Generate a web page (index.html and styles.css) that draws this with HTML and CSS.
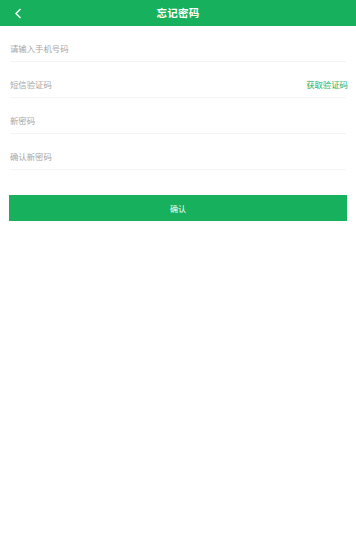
FILE: index.html
```html
<!DOCTYPE html>
<html lang="zh-CN">
<head>
<meta charset="utf-8">
<title>忘记密码</title>
<link rel="stylesheet" href="styles.css">
</head>
<body>
<header class="topbar">
  <span class="back">
    <svg width="8" height="11" viewBox="0 0 8 11"><polyline points="6.5,1 2,5.5 6.5,10" fill="none" stroke="#fff" stroke-width="1.4"/></svg>
  </span>
  <h1 class="title">忘记密码</h1>
</header>
<main class="form">
  <div class="row"><span class="ph">请输入手机号码</span></div>
  <div class="row"><span class="ph">短信验证码</span><span class="code">获取验证码</span></div>
  <div class="row"><span class="ph">新密码</span></div>
  <div class="row"><span class="ph">确认新密码</span></div>
  <button class="submit">确认</button>
</main>
</body>
</html>
```

FILE: styles.css
```css
* { box-sizing: border-box; }
html, body { margin: 0; padding: 0; background: #fff; }
body { font-family: "Noto Sans CJK SC", "Noto Sans", sans-serif; width: 356px; }
.topbar {
  height: 26px;
  background: #17b05c;
  display: flex;
  align-items: center;
  justify-content: center;
  position: relative;
}
.back { position: absolute; left: 14px; top: 8px; display: flex; }
.title { margin: 0; color: #fff; font-size: 10.5px; font-weight: 700; line-height: 1; letter-spacing: 0.3px; }
.form { display: flex; flex-direction: column; }
.row {
  margin: 0 10px;
  height: 36px;
  padding: 17px 0 8px;
  border-bottom: 1px solid #f4f4f4;
  display: flex;
  justify-content: space-between;
  align-items: center;
  font-size: 8.4px;
  line-height: 10px;
}
.ph { color: #a6a6a6; }
.code { color: #1fb160; margin-right: -2px; }
.submit {
  margin: 25px 9px 0;
  height: 26px;
  border: none;
  background: #17b05c;
  color: #fff;
  font-family: inherit;
  font-size: 8px;
  padding: 0;
}
```
